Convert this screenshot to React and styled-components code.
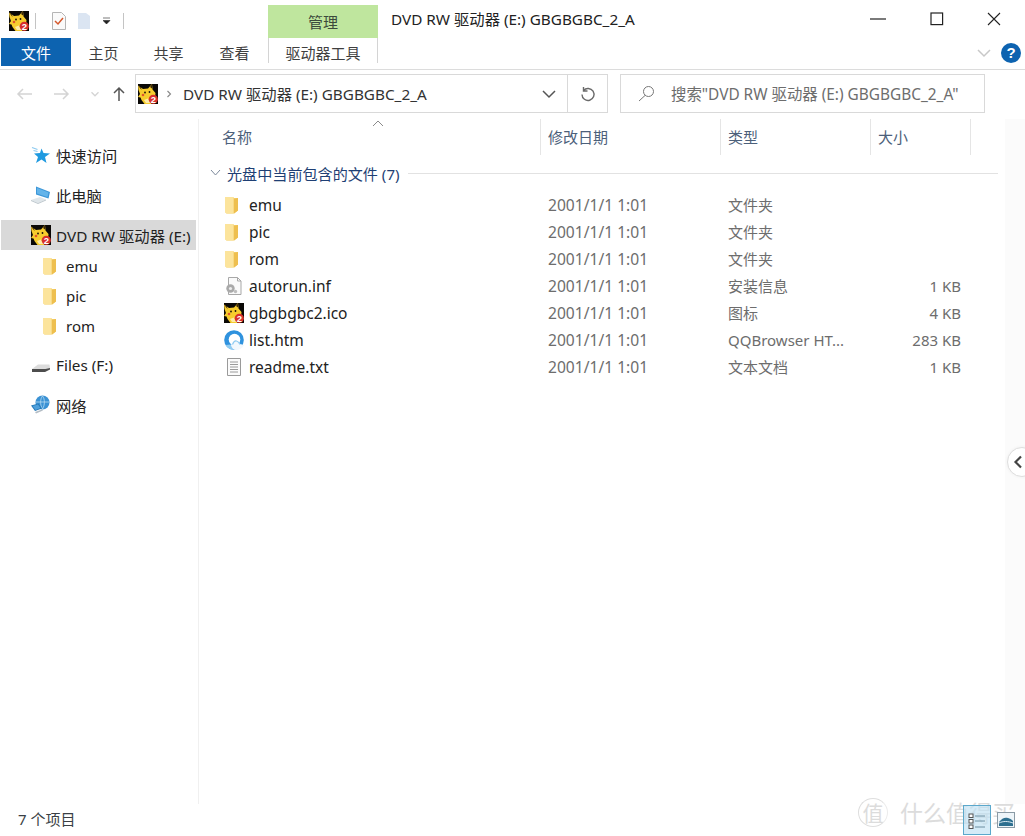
import React from 'react';
import styled, { createGlobalStyle } from 'styled-components';

const Global = createGlobalStyle`
  html, body { margin: 0; padding: 0; background: #fff; }
  body { font-family: "Noto Sans", "Noto Sans CJK SC", "Open Sans", sans-serif; color: #1a1a1a; }
`;

const Window = styled.div`
  width: 1025px;
  height: 836px;
  display: flex;
  flex-direction: column;
  overflow: hidden;
  position: relative;
  background: #fff;
`;

// title bar
const TitleBar = styled.div`
  height: 38px;
  display: flex;
  align-items: stretch;
`;
const QuickAccess = styled.div`
  width: 268px;
  display: flex;
  align-items: center;
  padding: 4px 0 0 9px;
  box-sizing: border-box;
`;
const QuickSep = styled.div`
  width: 1px;
  height: 16px;
  background: #c4c4c4;
  margin: ${p => p.$m || '0 15px 0 6px'};
`;
const ManageTab = styled.div`
  width: 110px;
  margin-top: 5px;
  background: #bfe69e;
  display: flex;
  align-items: center;
  justify-content: center;
  font-size: 15px;
  color: #3c4a3c;
  box-sizing: border-box;
`;
const WindowTitle = styled.div`
  flex: 1;
  padding: 0 0 0 13px;
  font-size: 15.3px;
  line-height: 38px;
  color: #222;
`;
const WinButtons = styled.div`
  display: flex;
  align-items: center;
  gap: 43px;
  padding-right: 24px;
`;

// ribbon
const Ribbon = styled.div`
  height: 31px;
  display: flex;
  border-bottom: 1px solid #dcdcdc;
  box-sizing: content-box;
  position: relative;
`;
const FileTab = styled.div`
  width: 70px;
  height: 28px;
  margin-left: 1px;
  background: #0d63b0;
  color: #fff;
  font-size: 15px;
  display: flex;
  align-items: center;
  justify-content: center;
`;
const Tab = styled.div`
  width: ${p => p.$w}px;
  height: 29px;
  font-size: 15px;
  color: #3f3f3f;
  display: flex;
  align-items: center;
  justify-content: center;
`;
const ToolsTab = styled(Tab)`
  border-style: solid;
  border-width: 0 1px;
  border-image: linear-gradient(#d4d4d4 85%, transparent 85%) 1;
  box-sizing: border-box;
  background: #fff;
`;
const RibbonEnd = styled.div`
  margin-left: auto;
  display: flex;
  align-items: center;
  gap: 9px;
  padding-right: 4px;
  padding-bottom: 2px;
`;
const Help = styled.div`
  width: 20px;
  height: 20px;
  border-radius: 50%;
  background: #0d63b0;
  color: #fff;
  font-size: 15px;
  font-weight: 700;
  font-family: "Liberation Sans", sans-serif;
  display: flex;
  align-items: center;
  justify-content: center;
`;

// address row
const AddressRow = styled.div`
  height: 49px;
  display: flex;
  align-items: center;
  padding: 1px 40px 3px 16px;
  box-sizing: border-box;
`;
const NavButtons = styled.div`
  width: 119px;
  display: flex;
  align-items: center;
`;
const NavSlot = styled.div`
  width: ${p => p.$w}px;
  display: flex;
  align-items: center;
  justify-content: flex-start;
`;
const AddressBox = styled.div`
  width: 473px;
  height: 39px;
  border: 1px solid #d9d9d9;
  box-sizing: border-box;
  display: flex;
  align-items: center;
  padding-left: 2px;
  font-size: 15.3px;
  color: #333;
`;
const CrumbMark = styled.span`
  display: flex;
  margin-left: 5px;
`;
const Crumb = styled.span`
  margin-left: 8px;
  padding-bottom: 2px;
  flex: 1;
  white-space: nowrap;
`;
const AddressEnd = styled.div`
  width: 39px;
  height: 37px;
  margin-left: 10px;
  border-left: 1px solid #d9d9d9;
  display: flex;
  align-items: center;
  justify-content: center;
`;
const SearchBox = styled.div`
  width: 365px;
  height: 39px;
  margin-left: 12px;
  border: 1px solid #d9d9d9;
  box-sizing: border-box;
  display: flex;
  align-items: center;
  gap: 16px;
  padding-left: 17px;
  font-size: 15.4px;
  color: #6d6d6d;
  white-space: nowrap;
`;

// main
const Main = styled.div`
  flex: 1;
  display: flex;
  min-height: 0;
`;
const Sidebar = styled.nav`
  width: 199px;
  box-sizing: border-box;
  border-right: 1px solid #f0f0f0;
  padding-top: 21px;
  flex: none;
`;
const NavItem = styled.div`
  height: 30px;
  margin: ${p => p.$m || 0};
  width: 195px;
  margin-left: 1px;
  display: flex;
  align-items: center;
  gap: ${p => (p.$child ? 9 : 5)}px;
  padding-left: ${p => (p.$child ? 42 : 30)}px;
  box-sizing: border-box;
  font-size: ${p => (p.$child ? 15 : 15.3)}px;
  color: #222;
  white-space: nowrap;
  background: ${p => (p.$active ? '#d9d9d9' : 'transparent')};
`;
const Content = styled.div`
  flex: 1;
  min-width: 0;
  padding-right: 7px;
`;
const ScrollTrack = styled.div`
  width: 20px;
  flex: none;
  background: #fbfbfb;
`;
const HeaderRow = styled.div`
  height: 36px;
  display: flex;
  position: relative;
`;
const HeaderCell = styled.div`
  width: ${p => p.$w}px;
  box-sizing: border-box;
  padding: 0 0 2px ${p => p.$pl || 7}px;
  height: 36px;
  border-right: 1px solid #e5e5e5;
  display: flex;
  align-items: center;
  font-size: 15px;
  color: #4c607a;
`;
const SortMark = styled.svg`
  position: absolute;
  left: 173px;
  top: 1px;
`;
const Group = styled.div`
  height: 36px;
  display: flex;
  align-items: center;
  padding-left: 11px;
  font-size: 15.1px;
  color: #1f3f74;
  white-space: nowrap;
`;
const GroupChevron = styled.svg`
  margin-right: 6px;
`;
const GroupLine = styled.div`
  flex: 1;
  height: 1px;
  background: #e2e2e2;
  margin-left: 8px;
`;
const FileRow = styled.div`
  height: 27px;
  display: flex;
  align-items: center;
  font-size: 15.5px;
`;
const NameCell = styled.div`
  width: 342px;
  display: flex;
  align-items: center;
  gap: 5px;
  padding-left: 25px;
  box-sizing: border-box;
  color: #222;
`;
const IconSlot = styled.span`
  width: 20px;
  box-sizing: border-box;
  display: flex;
  padding-left: ${p => (p.$folder ? 1 : 0)}px;
`;
const DateCell = styled.div`
  width: 180px;
  font-size: 15.6px;
  color: #6d6d6d;
  padding-left: 7px;
  box-sizing: border-box;
`;
const TypeCell = styled.div`
  width: 150px;
  font-size: 15px;
  color: #6d6d6d;
  padding-left: 7px;
  box-sizing: border-box;
  white-space: nowrap;
`;
const SizeCell = styled.div`
  width: 90px;
  font-size: 15px;
  color: #6d6d6d;
  text-align: right;
  white-space: nowrap;
`;
const StatusBar = styled.div`
  height: 32px;
  display: flex;
  align-items: center;
  padding: 0 0 4px 18px;
  box-sizing: border-box;
  font-size: 15px;
  color: #3a3f45;
`;

// bits lying over the page
const PeekHandle = styled.div`
  position: absolute;
  left: 1007px;
  top: 447px;
  width: 30px;
  height: 30px;
  border-radius: 50%;
  background: #fff;
  border: 1px solid #dedede;
  box-sizing: border-box;
  box-shadow: 0 0 3px #eee;
  display: flex;
  align-items: center;
  padding-left: 5px;
`;
const ViewSwitch = styled.div`
  position: absolute;
  left: 963px;
  top: 805px;
  display: flex;
  align-items: center;
  gap: 6px;
`;
const DetailsButton = styled.div`
  width: 28px;
  height: 30px;
  background: rgba(190, 225, 242, 0.65);
  border: 1px solid #5ba8cc;
  box-sizing: border-box;
  display: flex;
  align-items: flex-end;
  justify-content: center;
  padding-bottom: 4px;
`;
const Watermark = styled.div`
  position: absolute;
  left: 858px;
  top: 795px;
  display: flex;
  align-items: center;
  gap: 12px;
  color: #dcdcdc;
  font-size: 23px;
  white-space: nowrap;
  pointer-events: none;
`;
const WatermarkSeal = styled.div`
  width: 30px;
  height: 29px;
  border-radius: 50%;
  border: 1px solid #dedede;
  border-right-color: #ececec;
  display: flex;
  align-items: center;
  justify-content: center;
  font-size: 21px;
  box-sizing: border-box;
`;

const Pika = ({ size = 20 }) => (
  <svg width={size} height={size} viewBox="0 0 20 20" style={{ flex: 'none' }}>
    <rect width="20" height="20" fill="#0a0806" />
    <path d="M0 1.500l5 3.500 5-.5L14 0l.5 5.500 3 3.500-.5 5-4 6H6.500L3.500 16 2.500 13.500 0 13l2-3L.5 6z" fill="#f6cc2e" />
    <path d="M0 1.500l3 2 .5 2.500zM14 0l-2 3 2 1.500z" fill="#3a2508" />
    <circle cx="7" cy="8.500" r=".9" fill="#1a1208" />
    <circle cx="11.500" cy="8" r=".9" fill="#1a1208" />
    <circle cx="5" cy="11" r="1.300" fill="#e0562c" />
    <path d="M6 16l4-1.500 2 4.500H8z" fill="#fdeba6" />
    <circle cx="15.300" cy="15.300" r="4.600" fill="#d8302c" />
    <text x="15.300" y="18.700" fontSize="9.500" fontWeight="700" fill="#fff" textAnchor="middle" fontFamily="Liberation Sans">2</text>
  </svg>
);

const Folder = () => (
  <svg width="14" height="20" viewBox="0 0 14 20" style={{ flex: 'none' }}>
    <path d="M0 2h8l1 1h4v12.500L9 18.500H1.500L0 17z" fill="#f4cf6a" />
    <path d="M0 2h8.500v16.500h-7L0 17z" fill="#fce49c" />
    <path d="M9 4l4-1v12.500L9 18.500z" fill="#eebf4f" />
  </svg>
);

const IniIcon = () => (
  <svg width="20" height="20" viewBox="0 0 20 20" style={{ flex: 'none' }}>
    <path d="M4.500 1.500h9l3.500 3.500v13.500h-12.500z" fill="#fafafa" stroke="#a8a8a8" />
    <path d="M13.500 1.500v3.500h3.500" fill="none" stroke="#a8a8a8" />
    <circle cx="6.500" cy="12.500" r="4.200" fill="#a9a9a9" />
    <circle cx="6.500" cy="12.500" r="1.600" fill="#ececec" />
    <circle cx="11.500" cy="15.500" r="1.700" fill="#bdbdbd" />
  </svg>
);

const BrowserIcon = () => (
  <svg width="20" height="20" viewBox="0 0 20 20" style={{ flex: 'none' }}>
    <circle cx="10" cy="10" r="9.800" fill="#2f92de" />
    <path d="M1.500 15a9.800 9.800 0 0 0 8 4.800L12 14z" fill="#8fcbf1" />
    <circle cx="10.500" cy="9.500" r="5.800" fill="#fff" />
    <path d="M7 15.500c1-3.500 3-5.500 5.500-5 2 .5 3 2.500 3.500 3.500 2 .2 3 1 4 1.500C18 18.500 15 20 12 20c-2.500 0-4-2-5-4.500z" fill="#f2f8fd" />
    <path d="M8.500 14.500c1-2.500 2.500-4 4-3.500 2 .5 3 2.500 3.500 3.500" fill="none" stroke="#8fcbf1" strokeWidth="1.200" />
  </svg>
);

const TextIcon = () => (
  <svg width="20" height="20" viewBox="0 0 20 20" style={{ flex: 'none' }}>
    <path d="M3.500 1.500h13v17h-13z" fill="#fbfbfb" stroke="#9a9a9a" />
    <path d="M6 5h8M6 7.500h8M6 10h8M6 12.500h8M6 15h8" stroke="#9a9a9a" />
  </svg>
);

const StarIcon = () => (
  <svg width="20" height="20" viewBox="0 0 20 20" style={{ flex: 'none' }}>
    <path d="M10.500 3.500l2 4.500 6.500.5-5 3.500 1.500 6-5-3.500-5.500 3.500 2-6L3 8.500l6-.5z" fill="#1f9ae0" />
    <path d="M1 2.500l5.500 2M2.500 5.500l4 1" stroke="#8ccaf0" strokeWidth="1.200" />
  </svg>
);

const PcIcon = () => (
  <svg width="20" height="20" viewBox="0 0 20 20" style={{ flex: 'none' }}>
    <path d="M5 1.500l14 5.500-1.500 6.500L5 9.500z" fill="#3d97d8" />
    <path d="M6 3l11.500 4.500-1 4.500L6 8.500z" fill="#63b4ea" />
    <path d="M0 15l9-3 6 2.500-8 3.500z" fill="#dfe6ea" />
    <path d="M0 15l7 3 8-3.500v1L7 19l-7-3z" fill="#bcc6cc" />
  </svg>
);

const DriveIcon = () => (
  <svg width="20" height="20" viewBox="0 0 20 20" style={{ flex: 'none' }}>
    <path d="M1 14l6-4.500h11.500l.5 3.500-5 4H1z" fill="#dcdcdc" />
    <path d="M1 14h13.500l4.500-1v1.500L14 17H1z" fill="#4d4d4d" />
  </svg>
);

const NetIcon = () => (
  <svg width="20" height="20" viewBox="0 0 20 20" style={{ flex: 'none' }}>
    <circle cx="11.500" cy="7.500" r="7" fill="#3b92d4" />
    <path d="M5 7h13M11.500 1c-2.500 3-2.500 9 0 13M11.500 1c2.500 3 2.500 9 0 13" fill="none" stroke="#b7dcf2" strokeWidth=".8" />
    <path d="M0 10.500l7.500-2 3.500 5-7 2.500z" fill="#2478b8" />
    <path d="M1.500 11l5.500-1.500 2.500 3.500-5 2z" fill="#4ea0dc" />
    <path d="M4 17l7-2.500 1 1-7 3z" fill="#b3bcc4" />
  </svg>
);

const TaskIcon = () => (
  <svg width="16" height="20" viewBox="0 0 16 20">
    <path d="M1.500 1.500h9l4 4v13h-13z" fill="#fafafa" stroke="#b5b5b5" />
    <path d="M4 10l3 3 5-6" fill="none" stroke="#d5582c" strokeWidth="1.500" />
  </svg>
);

const Arrow = ({ d, c = '#d4d4d4', w = 16 }) => (
  <svg width={w} height="16" viewBox="0 0 16 16">
    <path d={d} fill="none" stroke={c} strokeWidth="1.500" />
  </svg>
);

const files = [
  { name: 'emu', icon: <Folder />, folder: true, type: '文件夹', size: '' },
  { name: 'pic', icon: <Folder />, folder: true, type: '文件夹', size: '' },
  { name: 'rom', icon: <Folder />, folder: true, type: '文件夹', size: '' },
  { name: 'autorun.inf', icon: <IniIcon />, type: '安装信息', size: '1 KB' },
  { name: 'gbgbgbc2.ico', icon: <Pika />, type: '图标', size: '4 KB' },
  { name: 'list.htm', icon: <BrowserIcon />, type: 'QQBrowser HT...', size: '283 KB' },
  { name: 'readme.txt', icon: <TextIcon />, type: '文本文档', size: '1 KB' },
];

export default function App() {
  return (
    <Window>
      <Global />
      <TitleBar>
        <QuickAccess>
          <Pika />
          <QuickSep />
          <TaskIcon />
          <svg width="14" height="18" viewBox="0 0 14 18" style={{ marginLeft: 10 }}>
            <path d="M1 1h8l4 3v13H1z" fill="#dbe5f2" />
          </svg>
          <svg width="8" height="8" viewBox="0 0 8 8" style={{ marginLeft: 12 }}>
            <path d="M0 1h7M0 3.500h7l-3.500 3.500z" fill="#222" stroke="#222" strokeWidth=".6" />
          </svg>
          <QuickSep $m="0 0 0 12px" />
        </QuickAccess>
        <ManageTab>管理</ManageTab>
        <WindowTitle>DVD RW 驱动器 (E:) GBGBGBC_2_A</WindowTitle>
        <WinButtons>
          <svg width="18" height="14" viewBox="0 0 18 14"><path d="M1 7h16" stroke="#222" strokeWidth="1.200" /></svg>
          <svg width="14" height="14" viewBox="0 0 14 14"><rect x="1" y="1" width="11.600" height="11.600" fill="none" stroke="#222" strokeWidth="1.200" /></svg>
          <svg width="14" height="14" viewBox="0 0 14 14"><path d="M1 1l12 12M13 1L1 13" stroke="#222" strokeWidth="1.100" /></svg>
        </WinButtons>
      </TitleBar>
      <Ribbon>
        <FileTab>文件</FileTab>
        <Tab $w={65}>主页</Tab>
        <Tab $w={65}>共享</Tab>
        <Tab $w={67}>查看</Tab>
        <ToolsTab $w={110}>驱动器工具</ToolsTab>
        <RibbonEnd>
          <Arrow d="M2 5l6 6 6-6" c="#c8c8c8" />
          <Help>?</Help>
        </RibbonEnd>
      </Ribbon>
      <AddressRow>
        <NavButtons>
          <NavSlot $w={38}><Arrow d="M16 8H2M7 3L2 8l5 5" /></NavSlot>
          <NavSlot $w={34}><Arrow d="M0 8h14M9 3l5 5-5 5" /></NavSlot>
          <NavSlot $w={22}><Arrow d="M4 6l4 4 4-4" w={14} /></NavSlot>
          <NavSlot $w={25}><Arrow d="M9 15V2M4 7l5-5 5 5" c="#555" /></NavSlot>
        </NavButtons>
        <AddressBox>
          <Pika />
          <CrumbMark><Arrow d="M6 4l4 4-4 4" c="#888" w={12} /></CrumbMark>
          <Crumb>DVD RW 驱动器 (E:) GBGBGBC_2_A</Crumb>
          <Arrow d="M2 5l6 6 6-6" c="#555" />
          <AddressEnd>
            <svg width="16" height="16" viewBox="0 0 16 16">
              <path d="M3.500 4.500A6 6 0 1 1 2 8.500M3.500 1v4h4" fill="none" stroke="#6a6a6a" strokeWidth="1.400" />
            </svg>
          </AddressEnd>
        </AddressBox>
        <SearchBox>
          <svg width="17" height="17" viewBox="0 0 17 17">
            <circle cx="10.500" cy="6.500" r="5" fill="none" stroke="#777" />
            <path d="M7 10.500L1 16" stroke="#777" />
          </svg>
          搜索"DVD RW 驱动器 (E:) GBGBGBC_2_A"
        </SearchBox>
      </AddressRow>
      <Main>
        <Sidebar>
          <NavItem><StarIcon />快速访问</NavItem>
          <NavItem $m="10px 0 0"><PcIcon />此电脑</NavItem>
          <NavItem $active $m="10px 0 1px"><Pika />DVD RW 驱动器 (E:)</NavItem>
          <NavItem $child><Folder />emu</NavItem>
          <NavItem $child><Folder />pic</NavItem>
          <NavItem $child><Folder />rom</NavItem>
          <NavItem $m="9px 0 0"><DriveIcon />Files (F:)</NavItem>
          <NavItem $m="10px 0 0"><NetIcon />网络</NavItem>
        </Sidebar>
        <Content>
          <HeaderRow>
            <HeaderCell $w={342} $pl={23}>名称</HeaderCell>
            <HeaderCell $w={180}>修改日期</HeaderCell>
            <HeaderCell $w={150}>类型</HeaderCell>
            <HeaderCell $w={100}>大小</HeaderCell>
            <SortMark width="12" height="7" viewBox="0 0 12 7">
              <path d="M1 6l5-5 5 5" fill="none" stroke="#8a8a8a" />
            </SortMark>
          </HeaderRow>
          <Group>
            <GroupChevron width="11" height="8" viewBox="0 0 11 8">
              <path d="M1 1l4.500 5L10 1" fill="none" stroke="#7d8a9c" />
            </GroupChevron>
            光盘中当前包含的文件 (7)
            <GroupLine />
          </Group>
          {files.map(f => (
            <FileRow key={f.name}>
              <NameCell>
                <IconSlot $folder={f.folder}>{f.icon}</IconSlot>
                {f.name}
              </NameCell>
              <DateCell>2001/1/1 1:01</DateCell>
              <TypeCell>{f.type}</TypeCell>
              <SizeCell>{f.size}</SizeCell>
            </FileRow>
          ))}
        </Content>
        <ScrollTrack />
      </Main>
      <StatusBar>7 个项目</StatusBar>
      <PeekHandle>
        <svg width="10" height="14" viewBox="0 0 10 14"><path d="M8 1.500L2.500 7 8 12.500" fill="none" stroke="#444" strokeWidth="2.200" /></svg>
      </PeekHandle>
      <Watermark>
        <WatermarkSeal>值</WatermarkSeal>
        什么值得买
      </Watermark>
      <ViewSwitch>
        <DetailsButton>
          <svg width="18" height="17" viewBox="0 0 18 17">
            <rect x="1" y="1" width="4" height="3.500" fill="#fff" stroke="#555" />
            <rect x="1" y="6.500" width="4" height="3.500" fill="#fff" stroke="#555" />
            <rect x="1" y="12" width="4" height="3.500" fill="#fff" stroke="#555" />
            <path d="M7 3h10M7 8h10M7 14h10" stroke="#6d8ea0" />
          </svg>
        </DetailsButton>
        <svg width="18" height="16" viewBox="0 0 18 16">
          <rect x=".5" y=".5" width="17" height="15" fill="#eef5f9" stroke="#8a9aa5" />
          <path d="M2 10c3-4 6-5 9-4 2 .5 3 1 5 3v5H2z" fill="#2d6f8f" />
          <path d="M2 11c4-2 9-2 14 0" fill="none" stroke="#dbeaf2" />
        </svg>
      </ViewSwitch>
    </Window>
  );
}
